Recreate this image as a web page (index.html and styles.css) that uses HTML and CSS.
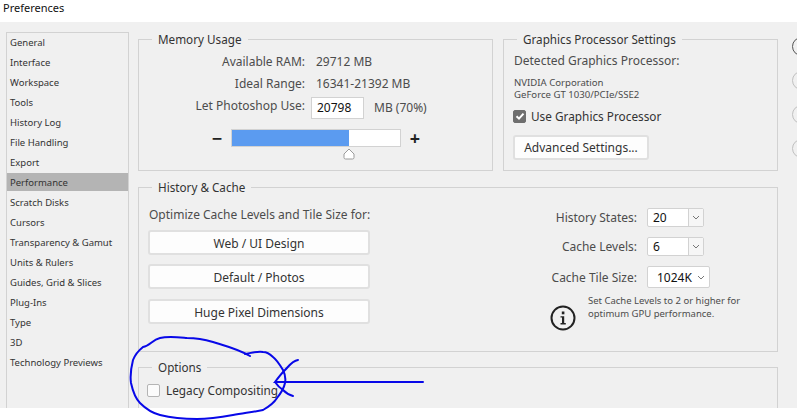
FILE: index.html
```html
<!DOCTYPE html>
<html lang="en">
<head>
    <meta charset="UTF-8">
    <meta name="viewport" content="width=device-width, initial-scale=1.0">
    <title>Preferences</title>
    <link rel="stylesheet" href="styles.css">
</head>
<body>
    <div class="titlebar">Preferences</div>

    <div class="dialog">
        <ul class="sidebar">
            <li>General</li>
            <li>Interface</li>
            <li>Workspace</li>
            <li>Tools</li>
            <li>History Log</li>
            <li>File Handling</li>
            <li>Export</li>
            <li class="active">Performance</li>
            <li>Scratch Disks</li>
            <li>Cursors</li>
            <li>Transparency &amp; Gamut</li>
            <li>Units &amp; Rulers</li>
            <li>Guides, Grid &amp; Slices</li>
            <li>Plug-Ins</li>
            <li>Type</li>
            <li>3D</li>
            <li>Technology Previews</li>
        </ul>

        <div class="content">
            <div class="top-row">
                <fieldset class="panel memory">
                    <legend>Memory Usage</legend>
                    <div class="memory-grid">
                        <div class="label">Available RAM:</div>
                        <div class="value">29712 MB</div>
                        <div class="label">Ideal Range:</div>
                        <div class="value">16341-21392 MB</div>
                        <div class="label">Let Photoshop Use:</div>
                        <div class="use-row">
                            <div class="use-input">20798</div>
                            <span>MB (70%)</span>
                        </div>
                    </div>
                    <div class="slider-row">
                        <span class="step">&minus;</span>
                        <div class="slider">
                            <div class="slider-fill" style="width: 69.5%"></div>
                            <svg class="slider-thumb" width="12" height="12" viewBox="0 0 12 12">
                                <path d="M1 9.5V6L6 1L11 6V9.5Q11 11 9.5 11H2.5Q1 11 1 9.5Z" fill="#fff" stroke="#9a9a9a"/>
                            </svg>
                        </div>
                        <span class="step">+</span>
                    </div>
                </fieldset>

                <fieldset class="panel gpu">
                    <legend>Graphics Processor Settings</legend>
                    <div class="gpu-body">
                        <div class="gpu-title">Detected Graphics Processor:</div>
                        <div class="gpu-name">NVIDIA Corporation<br>GeForce GT 1030/PCIe/SSE2</div>
                        <div class="check-row">
                            <span class="checkbox checked">
                                <svg width="10" height="10" viewBox="0 0 10 10">
                                    <path d="M1.5 5.2L4 7.6L8.5 2.6" fill="none" stroke="#fff" stroke-width="2"/>
                                </svg>
                            </span>
                            <span>Use Graphics Processor</span>
                        </div>
                        <div class="btn advanced">Advanced Settings...</div>
                    </div>
                </fieldset>
            </div>

            <fieldset class="panel history">
                <legend>History &amp; Cache</legend>
                <div class="history-body">
                    <div class="presets">
                        <div class="presets-title">Optimize Cache Levels and Tile Size for:</div>
                        <div class="btn">Web / UI Design</div>
                        <div class="btn">Default / Photos</div>
                        <div class="btn">Huge Pixel Dimensions</div>
                    </div>
                    <div class="cache">
                        <div class="cache-row">
                            <div class="cache-label">History States:</div>
                            <div class="select">
                                <span class="select-value">20</span>
                                <span class="select-arrow">
                                    <svg width="8" height="5" viewBox="0 0 8 5"><path d="M1 1L4 4L7 1" fill="none" stroke="#777"/></svg>
                                </span>
                            </div>
                        </div>
                        <div class="cache-row">
                            <div class="cache-label">Cache Levels:</div>
                            <div class="select">
                                <span class="select-value">6</span>
                                <span class="select-arrow">
                                    <svg width="8" height="5" viewBox="0 0 8 5"><path d="M1 1L4 4L7 1" fill="none" stroke="#777"/></svg>
                                </span>
                            </div>
                        </div>
                        <div class="cache-row tile">
                            <div class="cache-label">Cache Tile Size:</div>
                            <div class="select wide">
                                <span class="select-value">1024K</span>
                                <svg width="8" height="5" viewBox="0 0 8 5"><path d="M1 1L4 4L7 1" fill="none" stroke="#777"/></svg>
                            </div>
                        </div>
                        <div class="note">
                            <svg class="note-icon" width="26" height="26" viewBox="0 0 26 26">
                                <circle cx="13" cy="13" r="11.5" fill="none" stroke="#222" stroke-width="2"/>
                                <rect x="11.8" y="6.5" width="2.6" height="2.8" fill="#222"/>
                                <path d="M10.5 11.2H14.2V18H15.8V19.4H10.5V18H12V12.6H10.5Z" fill="#222"/>
                            </svg>
                            <div class="note-text">Set Cache Levels to 2 or higher for<br>optimum GPU performance.</div>
                        </div>
                    </div>
                </div>
            </fieldset>

            <fieldset class="panel options">
                <legend>Options</legend>
                <div class="check-row options-body">
                    <span class="checkbox"></span>
                    <span>Legacy Compositing</span>
                </div>
            </fieldset>
        </div>

        <div class="side-buttons">
            <div class="side-circle first"></div>
            <div class="side-circle"></div>
            <div class="side-circle"></div>
            <div class="side-circle"></div>
        </div>
    </div>

    <!-- hand drawn marker on top of the screenshot -->
    <svg class="scribble" width="797" height="420" viewBox="0 0 797 420">
        <path d="M250 356C238 349 226 346 213 342C203 339 195 338 187 338C176 337 168 336 160 338C152 340 150 346 143 347C138 351 135 355 133 360C131 368 130 376 131 383C133 392 135 398 140 403C146 409 152 413 160 415C172 418 185 419 197 419C210 419 222 417 233 415C244 413 254 412 263 410C270 406 274 403 277 398C281 393 284 388 285 383C286 378 285 374 283 370C280 365 277 360 273 357C270 354 267 352 263 352C257 351 251 353 245 354" fill="none" stroke="#0808e8" stroke-width="2" stroke-linecap="round"/>
        <path d="M298 360C292 361 289 366 285 370C281 374 278 378 275 382H423M275 382C277 385 280 388 283 390C286 393 289 395 293 396" fill="none" stroke="#0808e8" stroke-width="2" stroke-linecap="round"/>
    </svg>
</body>
</html>
```

FILE: styles.css
```css
* {
    margin: 0;
    padding: 0;
    box-sizing: border-box;
}

body {
    position: relative;
    width: 797px;
    height: 420px;
    overflow: hidden;
    background: white;
    font-family: "Noto Sans", "Open Sans", sans-serif;
    font-size: 12px;
    color: #4c4c4c;
}

.titlebar {
    height: 22px;
    padding-left: 3px;
    font-size: 11px;
    line-height: 15px;
    color: #111;
}

.dialog {
    display: flex;
    height: 386px;
    overflow: hidden;
    background: #f0f0f0;
}

.sidebar {
    flex: none;
    width: 123px;
    height: 400px;
    margin: 10px 0 0 6px;
    border: 1px solid #d2d2d2;
    list-style: none;
    font-size: 9.5px;
    color: #333;
}

.sidebar li {
    height: 18px;
    margin-bottom: 2px;
    padding-left: 3px;
    line-height: 20px;
}

.sidebar li.active {
    background: #b4b4b4;
}

.content {
    flex: none;
    width: 640px;
    margin: 8px 0 0 9px;
}

.top-row {
    display: flex;
    gap: 10px;
    margin-bottom: 7px;
}

.panel {
    display: block;
    min-width: 0;
    border: 1px solid #d2d2d2;
}

.panel legend {
    margin-left: 13px;
    padding: 1px 6px;
    font-size: 11.7px;
    line-height: 16px;
    color: #333;
}

.memory {
    width: 355px;
    height: 141px;
}

.memory-grid {
    display: grid;
    grid-template-columns: 172px 1fr;
    grid-auto-rows: 22px;
    align-items: center;
    padding-top: 2px;
}

.label {
    padding-right: 6px;
    text-align: right;
}

.value {
    padding-left: 5px;
}

.use-row {
    display: flex;
    align-items: center;
    gap: 10px;
    margin-top: 5px;
}

.use-input {
    width: 53px;
    height: 22px;
    padding-left: 5px;
    border: 1px solid #d2d2d2;
    background: white;
    line-height: 20px;
    color: #111;
}

.slider-row {
    display: flex;
    align-items: center;
    gap: 5px;
    margin-top: 13px;
    padding-left: 69px;
}

.step {
    width: 18px;
    text-align: center;
    font-size: 18px;
    font-weight: bold;
    line-height: 18px;
    color: #222;
}

.slider {
    position: relative;
    width: 170px;
    height: 18px;
    border: 1px solid #d2d2d2;
    background: white;
}

.slider-fill {
    height: 100%;
    background: #5b9bf0;
}

.slider-thumb {
    position: absolute;
    left: 111px;
    top: 18px;
}

.gpu {
    width: 275px;
    height: 141px;
}

.gpu-body {
    padding: 2px 0 0 10px;
}

.gpu-title {
    line-height: 22px;
}

.gpu-name {
    margin-top: 5px;
    font-size: 9.6px;
    line-height: 12px;
}

.check-row {
    display: flex;
    align-items: center;
    gap: 5px;
    height: 20px;
    margin: 5px 0 0 -1px;
    font-size: 11.8px;
    color: #333;
}

.checkbox {
    display: flex;
    align-items: center;
    justify-content: center;
    width: 13px;
    height: 13px;
    border: 1px solid #b4b4b4;
    border-radius: 2px;
    background: #fbfbfb;
}

.checkbox.checked {
    border-color: #6e6e6e;
    background: #6e6e6e;
}

.btn {
    width: 222px;
    height: 25px;
    margin-bottom: 10px;
    border: 2px solid #e0e0e0;
    border-radius: 3px;
    background: #fdfdfd;
    text-align: center;
    line-height: 24px;
    color: #333;
}

.advanced {
    width: 136px;
    margin: 9px 0 0 -1px;
    line-height: 22px;
}

.history {
    height: 174px;
    margin-bottom: 6px;
}

.history-body {
    display: flex;
    padding-left: 10px;
}

.presets {
    flex: none;
    width: 221px;
}

.presets-title {
    margin: 10px 0 6px;
    line-height: 18px;
    white-space: nowrap;
}

.presets .btn {
    margin-left: -1px;
}

.presets-title + .btn {
    margin-bottom: 9px;
}

.cache {
    margin: 12px 0 0 160px;
}

.cache-row {
    display: flex;
    align-items: center;
    gap: 10px;
    margin-bottom: 10px;
}

.cache-row.tile {
    margin-bottom: 6px;
}

.cache-label {
    width: 107px;
    text-align: right;
}

.select {
    display: flex;
    align-items: center;
    width: 57px;
    height: 19px;
    border: 1px solid #d2d2d2;
    border-radius: 2px;
    background: white;
    color: #111;
}

.select-value {
    flex: 1;
    padding-left: 5px;
}

.select-arrow {
    display: flex;
    align-items: center;
    justify-content: center;
    width: 15px;
    height: 100%;
    border-left: 1px solid #d2d2d2;
    background: #f6f6f6;
}

.select.wide {
    width: 63px;
    height: 22px;
    padding-right: 4px;
}

.select.wide .select-value {
    padding-left: 9px;
}

.note {
    display: flex;
    gap: 12px;
}

.note-icon {
    flex: none;
    margin: 11px 0 0 20px;
}

.note-text {
    font-size: 9.5px;
    line-height: 13px;
    white-space: nowrap;
}

.options {
    height: 60px;
}

.options-body {
    gap: 6px;
    height: 20px;
    margin: 4px 0 0 8px;
}

.side-buttons {
    flex: none;
    display: flex;
    flex-direction: column;
    gap: 15px;
    margin: 15px 0 0 14px;
}

.side-circle {
    width: 19px;
    height: 19px;
    border: 1px solid #c0c0c0;
    border-radius: 50%;
}

.side-circle.first {
    border-color: #555;
}

.scribble {
    position: absolute;
    left: 0;
    top: 0;
}
```
